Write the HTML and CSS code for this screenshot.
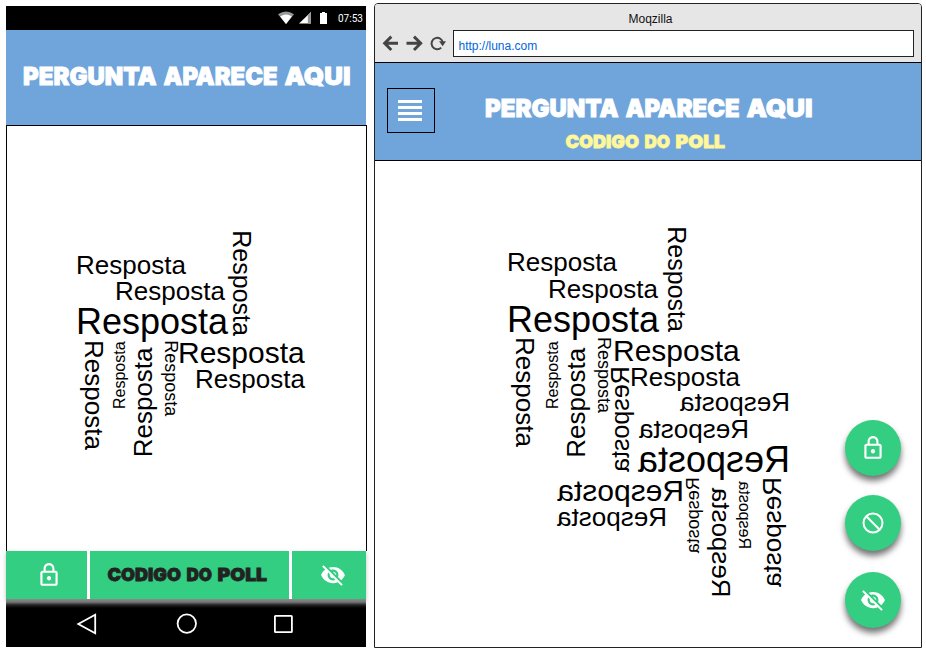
FILE: index.html
```html
<!DOCTYPE html>
<html lang="pt">
<head>
<meta charset="utf-8">
<title>Poll</title>
<link rel="stylesheet" href="styles.css">
</head>
<body>
<svg class="defs" width="0" height="0">
  <symbol id="lock" viewBox="0 0 24 24"><path fill="#fff" d="M12 17c1.100 0 2-.9 2-2s-.9-2-2-2-2 .9-2 2 .9 2 2 2zm6-9h-1V6c0-2.760-2.240-5-5-5S7 3.240 7 6v2H6c-1.100 0-2 .9-2 2v10c0 1.100.9 2 2 2h12c1.100 0 2-.9 2-2V10c0-1.100-.9-2-2-2zM8.900 6c0-1.710 1.390-3.100 3.100-3.100s3.100 1.390 3.100 3.100v2H8.900V6zM18 20H6V10h12v10z"/></symbol>
  <symbol id="hidden" viewBox="0 0 24 24"><path fill="#fff" d="M12 7c2.760 0 5 2.240 5 5 0 .65-.13 1.260-.36 1.830l2.920 2.920c1.510-1.260 2.700-2.890 3.430-4.750-1.730-4.390-6-7.500-11-7.500-1.400 0-2.740.25-3.980.7l2.160 2.160C10.740 7.130 11.350 7 12 7zM2 4.270l2.280 2.280.46.46C3.080 8.300 1.780 10.020 1 12c1.730 4.390 6 7.500 11 7.500 1.550 0 3.030-.3 4.380-.84l.42.42L19.730 22 21 20.730 3.270 3 2 4.270zM7.530 9.800l1.550 1.550c-.05.21-.08.43-.08.65 0 1.660 1.340 3 3 3 .22 0 .44-.03.65-.08l1.550 1.550c-.67.33-1.410.53-2.200.53-2.760 0-5-2.240-5-5 0-.79.2-1.530.53-2.200zm4.310-.78l3.150 3.150.02-.16c0-1.660-1.340-3-3-3l-.17.010z"/></symbol>
</svg>
<main class="stage">
  <section class="phone">
    <div class="status">
      <svg width="50" height="14" viewBox="0 0 50 14">
        <path fill="#999" d="M0 3.200Q8 -2.400 16 3.200L8 13Z"/><path fill="#fff" d="M2.200 5.400Q8 1.600 13.800 5.400L8 13Z"/>
        <path fill="#fff" d="M21 12.500L33 1v11.500z"/><path fill="#999" d="M29.800 4.100L33 1v11.500h-3.200z"/>
        <path fill="#fff" d="M42 2h2V1h3v1h2v11h-7z"/>
      </svg>
      <span class="time">07:53</span>
    </div>
    <header class="question">
      <svg class="display" width="360" height="95" viewBox="6 30 360 95"><text class="title" y="85"><tspan x="23" textLength="133.500" lengthAdjust="spacingAndGlyphs">PERGUNTA</tspan> <tspan x="163.500" textLength="114" lengthAdjust="spacingAndGlyphs">APARECE</tspan> <tspan x="284.500" textLength="66" lengthAdjust="spacingAndGlyphs">AQUI</tspan></text></svg>
    </header>
    <div class="answers">
      <svg width="359" height="425" viewBox="7 126 359 425">
        <g class="cloud">
          <text class="m" x="76" y="274">Resposta</text>
          <text class="m" x="115" y="300">Resposta</text>
          <text class="xl" x="76" y="334">Resposta</text>
          <text class="l" x="178" y="363">Resposta</text>
          <text class="m" x="195" y="388">Resposta</text>
          <text class="n" transform="translate(233 230.300) rotate(90)">Resposta</text>
          <text class="m" transform="translate(85 340) rotate(90)">Resposta</text>
          <text class="xs" transform="translate(124.500 409) rotate(-90)">Resposta</text>
          <text class="m" transform="translate(151.500 457.300) rotate(-90)">Resposta</text>
          <text class="s" transform="translate(165 340.300) rotate(90)">Resposta</text>
        </g>
      </svg>
    </div>
    <div class="actions">
      <div class="act"><svg width="26" height="26"><use href="#lock"/></svg></div>
      <div class="code"><svg class="display" width="199" height="48" viewBox="90 551 199 48"><text class="sub" y="581"><tspan x="107.500" textLength="73.500" lengthAdjust="spacingAndGlyphs">CODIGO</tspan> <tspan x="186.500" textLength="25.500" lengthAdjust="spacingAndGlyphs">DO</tspan> <tspan x="217.500" textLength="49.500" lengthAdjust="spacingAndGlyphs">POLL</tspan></text></svg></div>
      <div class="act last"><svg width="26" height="26"><use href="#hidden"/></svg></div>
    </div>
    <nav class="keys">
      <svg width="360" height="48" viewBox="6 599 360 48" fill="none" stroke="#fff" stroke-width="1.800">
        <path d="M95.200 614.700v18.600L78.300 624z"/><circle cx="186.800" cy="623.600" r="9.200"/><rect x="274.900" y="615.900" width="17" height="16.200" rx=".6"/>
      </svg>
    </nav>
  </section>
  <section class="browser">
    <div class="chrome">
      <div class="name">Moqzilla</div>
      <div class="bar">
        <svg width="78" height="27" viewBox="375 30 78 27" fill="none" stroke="#444" stroke-width="2.900">
          <path d="M398 43.300H385M391.300 36.600l-6.700 6.700 6.700 6.700M406.500 43.300H420M414 36.600l6.700 6.700-6.700 6.700"/>
          <path stroke-width="2" d="M441.200 47.600A5.700 5.700 0 1 1 442.900 43"/><path fill="#444" stroke="none" d="M439 41.300h7l-3.300 5z"/>
        </svg>
        <div class="url">http://luna.com</div>
      </div>
    </div>
    <header class="banner">
      <div class="menu"><i></i><i></i><i></i><i></i></div>
      <svg class="display" width="486" height="97" viewBox="435 63 486 97"><text class="title" y="117"><tspan x="485" textLength="133.500" lengthAdjust="spacingAndGlyphs">PERGUNTA</tspan> <tspan x="625.500" textLength="114" lengthAdjust="spacingAndGlyphs">APARECE</tspan> <tspan x="746.500" textLength="66" lengthAdjust="spacingAndGlyphs">AQUI</tspan></text><text class="sub pale" y="148"><tspan x="565.500" textLength="73.500" lengthAdjust="spacingAndGlyphs">CODIGO</tspan> <tspan x="644.500" textLength="25.500" lengthAdjust="spacingAndGlyphs">DO</tspan> <tspan x="675.500" textLength="49.500" lengthAdjust="spacingAndGlyphs">POLL</tspan></text></svg>
    </header>
    <div class="page">
      <svg width="465" height="486" viewBox="375 161 465 486">
        <g class="cloud">
          <text class="m" x="507" y="271">Resposta</text>
          <text class="m" x="548" y="298">Resposta</text>
          <text class="xl" x="507" y="332">Resposta</text>
          <text class="l" x="613" y="361">Resposta</text>
          <text class="m" x="630" y="386">Resposta</text>
          <text class="n" transform="translate(668 226.300) rotate(90)">Resposta</text>
          <text class="m" transform="translate(516 337) rotate(90)">Resposta</text>
          <text class="xs" transform="translate(558 409) rotate(-90)">Resposta</text>
          <text class="m" transform="translate(584.500 457.700) rotate(-90)">Resposta</text>
          <text class="s" transform="translate(597.500 337) rotate(90)">Resposta</text>
          <text class="m" transform="translate(790 411) scale(-1 1)">Resposta</text>
          <text class="m" transform="translate(749 438) scale(-1 1)">Resposta</text>
          <text class="xl" transform="translate(790 472) scale(-1 1)">Resposta</text>
          <text class="l" transform="translate(684 501) scale(-1 1)">Resposta</text>
          <text class="m" transform="translate(667 526) scale(-1 1)">Resposta</text>
          <text class="n" transform="translate(629 366.300) scale(-1 1) rotate(90)">Resposta</text>
          <text class="s" transform="translate(699 477.300) scale(-1 1) rotate(90)">Resposta</text>
          <text class="m" transform="translate(712.300 597.600) scale(-1 1) rotate(-90)">Resposta</text>
          <text class="xs" transform="translate(739.300 549) scale(-1 1) rotate(-90)">Resposta</text>
          <text class="m" transform="translate(780.500 477) scale(-1 1) rotate(90)">Resposta</text>
        </g>
      </svg>
      <div class="fabs">
        <div class="fab"><svg width="26" height="26"><use href="#lock"/></svg></div>
        <div class="fab"><svg width="22" height="22" viewBox="0 0 22 22" fill="none" stroke="#fff" stroke-width="2"><circle cx="11" cy="11" r="9.500"/><path d="M4.300 4.300l13.400 13.400"/></svg></div>
        <div class="fab"><svg width="26" height="26"><use href="#hidden"/></svg></div>
      </div>
    </div>
  </section>
</main>
</body>
</html>
```
FILE: styles.css
```css
* { box-sizing: border-box; }
body { margin: 0; background: #fff; font-family: "Liberation Sans", Arial, sans-serif; }
svg { display: block; flex: none; }
.defs { position: absolute; }
.stage { display: flex; gap: 7px; width: 926px; height: 655px; padding: 3px 0 0 6px; overflow: hidden; }
.phone { width: 361px; margin-top: 3px; }
.status { width: 360px; height: 24px; background: #000; display: flex; align-items: center; justify-content: flex-end; padding-right: 3px; gap: 10px; }
.time { color: #fff; font: 10px Roboto, sans-serif; width: 25px; white-space: nowrap; }
.question { width: 360px; height: 95px; background: #70a5db; }
.answers { height: 426px; border: 1px solid #000; border-bottom: 0; }
.actions { width: 360px; height: 48px; background: #33ce81; display: flex; box-shadow: 0 2px 4px rgba(0, 0, 0, .25); }
.act { width: 84px; border-right: 3px solid #fff; display: flex; align-items: center; justify-content: center; padding: 0 0 0 4px; }
.act.last { width: 77px; border-right: 0; border-left: 3px solid #fff; padding: 0 0 0 8px; }
.code { width: 199px; }
.keys { position: relative; width: 360px; height: 48px; background: linear-gradient(#8a8a8a, #777 3px, #222 6px, #000 9px); }
.display text { font-family: Inter, sans-serif; font-weight: 900; }
.title { font-size: 24.800px; fill: #fff; stroke: #fff; stroke-width: .9px; }
.sub { font-size: 18px; fill: #222; stroke: #222; stroke-width: .8px; }
.sub.pale { fill: #fff79a; stroke: #fff79a; }
.cloud text { fill: #000; font-family: "Liberation Sans", Arial, sans-serif; }
.xs { font-size: 16px; }
.s { font-size: 18px; }
.n { font-size: 25px; }
.m { font-size: 26px; }
.l { font-size: 30px; }
.xl { font-size: 36px; }
.browser { width: 548px; height: 645px; border: 1px solid #222; border-radius: 4px 4px 0 0; overflow: hidden; }
.chrome { height: 59px; background: #e6e6e6; border-bottom: 1px solid #000; }
.name { height: 26px; padding: 8px 0 0 5px; text-align: center; font-size: 12px; line-height: 14px; color: #111; }
.bar { display: flex; }
.url { width: 461px; height: 27px; border: 1px solid #222; background: #fff; color: #0066dd; font-size: 12px; line-height: 14px; padding: 8px 0 0 4.500px; }
.banner { height: 98px; background: #70a5db; border-bottom: 1px solid #000; display: flex; padding-left: 12px; }
.menu { flex: none; width: 48px; height: 45px; margin-top: 25px; border: 1px solid #000; padding: 11px 10px 0; display: flex; flex-direction: column; gap: 3px; }
.menu i { width: 24px; height: 3px; background: #fff; }
.page { height: 486px; display: flex; background: #fff; }
.fabs { padding: 259px 0 0 5px; }
.fab { width: 56px; height: 56px; margin-bottom: 20px; border-radius: 50%; background: #33ce81; display: flex; align-items: center; justify-content: center; box-shadow: 0 5px 6px rgba(0, 0, 0, .55); }
.fab:first-child { margin-bottom: 19px; }
.fab:nth-child(2) { margin-bottom: 21px; }
```
